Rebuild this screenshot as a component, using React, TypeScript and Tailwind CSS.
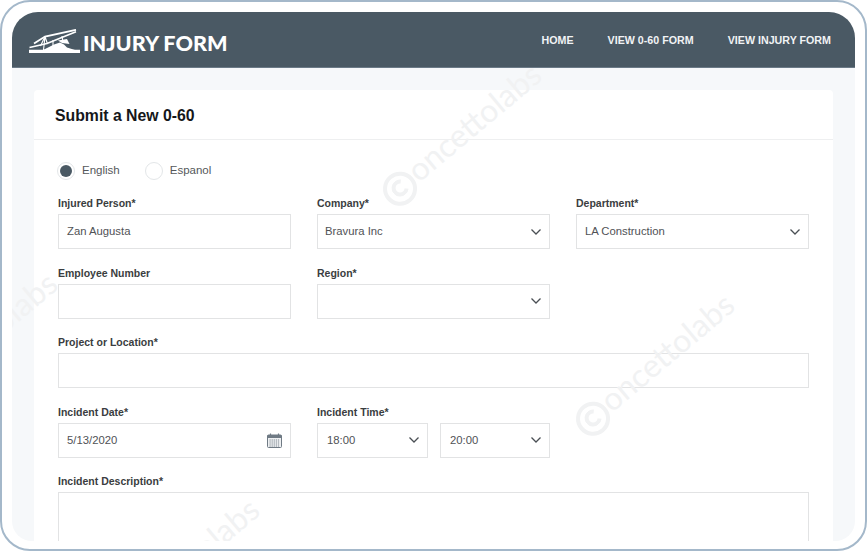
const Chevron = () => (
  <svg width="12" height="8" viewBox="0 0 12 8" fill="none" stroke="#4a4f54" strokeWidth="1.3" className="shrink-0">
    <path d="M1.5 1.5 L6 6 L10.5 1.5" />
  </svg>
);

const CalendarIcon = () => (
  <svg width="15" height="15" viewBox="0 0 15 15" className="-translate-x-px shrink-0">
    <rect x="0.5" y="2" width="14" height="12.5" rx="1" fill="#eef0f2" stroke="#6f7a84" />
    <rect x="0.5" y="2" width="14" height="3" fill="#6f7a84" />
    <path d="M3.5 0.5V3M11.5 0.5V3" stroke="#6f7a84" strokeWidth="1.2" />
    <path d="M2.5 7h10M2.5 9h10M2.5 11h10M2.5 13h10" stroke="#7c868f" strokeWidth="1" strokeDasharray="1.2 0.9" />
  </svg>
);

const Logo = () => (
  <svg width="52" height="25" viewBox="0 0 52 25" className="shrink-0" fill="none">
    <path d="M0 20.8 H51 V24 H0 Z" fill="#fff" />
    <path d="M14 21 L25 15.5 L31 13.5 L35 15.5 L38 18.5 L46 21 Z" fill="#fff" />
    <path d="M29 11.5 L38 10 L40.5 15 L33 14 Z" fill="#fff" />
    <path d="M5 14.5 L16 7.5 L47 0.8" stroke="#fff" strokeWidth="1.8" />
    <path d="M0.5 18.5 L18 14.5 L47 2.8" stroke="#fff" strokeWidth="1.6" />
    <path d="M16 7.5 L14.5 21 M16 7.5 L18.5 15 M11.5 17 L16 7.5 M24 11 L24 17 M33 7 L34 13" stroke="#fff" strokeWidth="1.1" />
  </svg>
);

const Label = ({ children }: { children: React.ReactNode }) => (
  <div className="mb-[4px] h-[13px] text-[10.5px] leading-[13px] font-bold text-[#3a3d40]">{children}</div>
);

const Box = ({ children, className = "" }: { children?: React.ReactNode; className?: string }) => (
  <div className={`flex h-[35px] items-center justify-between border border-[#e2e3e4] bg-white pr-[7px] text-[11.3px] text-[#505256] ${className}`}>
    {children}
  </div>
);

const Field = ({ label, value, select, className = "" }: { label: string; value?: string; select?: boolean; className?: string }) => (
  <div className={className}>
    <Label>{label}</Label>
    <Box className={value === "LA Construction" ? "pl-[8px]" : select ? "pl-[7px]" : "pl-[8px]"}>
      <span>{value}</span>
      {select && <Chevron />}
    </Box>
  </div>
);

const Watermark = ({ className }: { className: string }) => (
  <div className={`absolute origin-left -rotate-[40deg] whitespace-nowrap font-['Lato',sans-serif] text-[32px] leading-none text-[#f1f2f3] ${className}`}>
    <span className="mr-[1px] inline-flex h-[34px] w-[34px] items-center justify-center rounded-full border-[4px] border-[#f1f2f3] align-middle">
      <span className="h-[17px] w-[17px] rounded-full border-[4px] border-[#f1f2f3] border-r-transparent" />
    </span>
    oncettolabs
  </div>
);

export default function App() {
  return (
    <div className="h-[551px] w-[867px] overflow-hidden bg-white font-['Liberation_Sans',Arial,sans-serif]">
      <div className="h-full rounded-[30px] border-2 border-[#a4b8ca] px-[10px] pb-[8px] pt-[10px]">
        <div className="relative flex h-full flex-col overflow-hidden rounded-b-[20px] rounded-t-[26px] bg-[#f6f8fa]">
          <header className="flex h-[56px] shrink-0 items-center justify-between border-b border-[#6b7a87] bg-[#4a5964] pl-[17px] pr-[24px]">
            <div className="flex items-end gap-[2px] pt-[3px]">
              <Logo />
              <span className="-mb-[1px] font-['Lato',sans-serif] text-[21.6px] font-black leading-none text-white">INJURY FORM</span>
            </div>
            <nav className="flex gap-[34px] pt-[1px] text-[10.7px] font-bold text-[#f1f3f5]">
              <span>HOME</span>
              <span>VIEW 0-60 FORM</span>
              <span>VIEW INJURY FORM</span>
            </nav>
          </header>

          <main className="mx-[22px] mt-[22px] flex-1 rounded-t-[4px] bg-white">
            <div className="flex h-[50px] items-center border-b border-[#eeeff0] pl-[21px] pt-[2px] text-[15.8px] font-bold text-[#15171a]">
              Submit a New 0-60
            </div>
            <div className="px-[24px] pt-[21px]">
              <div className="flex h-[19px] items-center text-[11.5px] text-[#55585b]">
                <span className="flex h-[18px] w-[18px] -translate-x-px items-center justify-center rounded-full border border-[#e3e6e8]">
                  <span className="h-[12px] w-[12px] rounded-full bg-[#4a5964]" />
                </span>
                <span className="ml-[6px]">English</span>
                <span className="ml-[25px] h-[18px] w-[18px] rounded-full border border-[#e3e6e8]" />
                <span className="ml-[7px]">Espanol</span>
              </div>
              <div className="mt-[17px] grid grid-cols-[233px_233px_233px] gap-x-[26px] gap-y-[17.5px]">
                <Field label="Injured Person*" value="Zan Augusta" />
                <Field label="Company*" value="Bravura Inc" select />
                <Field label="Department*" value="LA Construction" select />
                <Field label="Employee Number" />
                <Field label="Region*" select />
                <div />
                <Field label="Project or Location*" className="col-span-3" />
                <div>
                  <Label>Incident Date*</Label>
                  <Box className="pl-[8px]">
                    <span>5/13/2020</span>
                    <CalendarIcon />
                  </Box>
                </div>
                <div>
                  <Label>Incident Time*</Label>
                  <div className="flex gap-[12px]">
                    <Box className="w-[111px] pl-[9px]"><span>18:00</span><Chevron /></Box>
                    <Box className="w-[110px] pl-[9px]"><span>20:00</span><Chevron /></Box>
                  </div>
                </div>
                <div />
                <div className="col-span-3">
                  <Label>Incident Description*</Label>
                  <div className="h-[100px] border border-[#e2e3e4] bg-white" />
                </div>
              </div>
            </div>
          </main>
          <Watermark className="left-[374px] top-[168px]" />
          <Watermark className="left-[567px] top-[398px]" />
          <Watermark className="-left-[110px] top-[377px]" />
          <Watermark className="left-[92px] top-[603px]" />
        </div>
      </div>
    </div>
  );
}
